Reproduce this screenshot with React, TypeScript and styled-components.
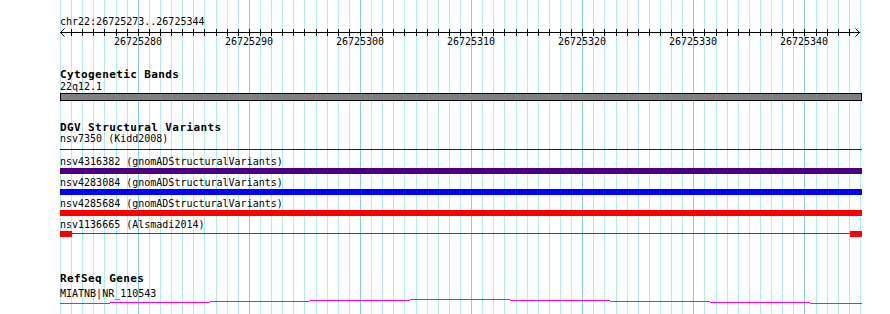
import React from 'react';
import styled, { createGlobalStyle } from 'styled-components';

const START = 26725273;
const GRID_COUNT = 73;
const X0 = 60;
const PX_PER_BP = 800 / 72;
const lineX = (i: number) => Math.round(X0 + i * PX_PER_BP);

const GlobalStyle = createGlobalStyle`
  html, body { margin: 0; padding: 0; background: #ffffff; }
  body { width: 890px; height: 314px; overflow: hidden; }
`;

const Panel = styled.div`
  position: relative;
  width: 890px;
  height: 314px;
  overflow: hidden;
  background: #ffffff;
  font-family: "DejaVu Sans Mono", "Liberation Mono", monospace;
  color: #000000;
`;

const GridLayer = styled.svg`
  position: absolute;
  left: 0;
  top: 0;
  width: 890px;
  height: 314px;
`;

const Content = styled.div`
  position: relative;
  display: flex;
  flex-direction: column;
  align-items: flex-start;
  width: 802px;
  padding: 16px 0 0 60px;
`;

const Label = styled.div<{ $gap?: number }>`
  margin-top: ${(p) => p.$gap ?? 0}px;
  font-size: 10px;
  line-height: 11px;
  height: 11px;
  white-space: nowrap;
`;

const TrackTitle = styled.div<{ $gap: number }>`
  margin-top: ${(p) => p.$gap}px;
  font-size: 11px;
  font-weight: bold;
  letter-spacing: 0.4px;
  line-height: 10px;
  height: 10px;
  white-space: nowrap;
`;

const RulerSvg = styled.svg`
  display: block;
  width: 802px;
  height: 20px;
  overflow: visible;
`;

const GlyphLane = styled.div<{ $height: number }>`
  display: flex;
  align-items: flex-start;
  width: 802px;
  height: ${(p) => p.$height}px;
`;

const Bar = styled.div<{ $color: string; $height: number; $offset: number; $outlined?: boolean }>`
  box-sizing: border-box;
  width: 100%;
  margin-top: ${(p) => p.$offset}px;
  height: ${(p) => p.$height}px;
  background: ${(p) => p.$color};
  border: ${(p) => (p.$outlined ? '1px solid #000000' : 'none')};
`;

const Block = styled.div<{ $color: string }>`
  flex: 0 0 12px;
  height: 6px;
  margin-top: 1px;
  background: ${(p) => p.$color};
`;

const Connector = styled.div<{ $color: string }>`
  flex: 1 1 auto;
  height: 1px;
  margin-top: 3px;
  background: ${(p) => p.$color};
`;

const GeneSvg = styled.svg`
  display: block;
  width: 802px;
  height: 6px;
`;

const tickLabels = [7, 17, 27, 37, 47, 57, 67];

function Grid() {
  const lines = [];
  for (let i = 0; i < GRID_COUNT; i++) {
    const major = (START + i) % 10 === 0;
    lines.push(
      <rect key={i} x={lineX(i)} y={0} width={1} height={314} fill={major ? '#87ceeb' : '#afeeee'} />
    );
  }
  return <GridLayer viewBox="0 0 890 314">{lines}</GridLayer>;
}

function Ruler() {
  const ticks = [];
  for (let i = 1; i < GRID_COUNT - 1; i++) {
    ticks.push(<rect key={i} x={lineX(i) - X0} y={2} width={1} height={7} fill="#000" />);
  }
  return (
    <RulerSvg viewBox="0 0 802 20">
      <rect x={0} y={5} width={800} height={1} fill="#000" />
      {ticks}
      <polyline points="4.5,1.5 0.5,5.5 4.5,9.5" fill="none" stroke="#000" strokeWidth={1} />
      <polyline points="795.5,1.5 799.5,5.5 795.5,9.5" fill="none" stroke="#000" strokeWidth={1} />
      {tickLabels.map((i) => (
        <text
          key={i}
          x={lineX(i) - X0}
          y={18}
          textAnchor="middle"
          fontSize="10"
          fontFamily='"DejaVu Sans Mono", "Liberation Mono", monospace'
          fill="#000"
        >
          {START + i}
        </text>
      ))}
    </RulerSvg>
  );
}

const geneSegments: [number, number, number][] = [
  [60, 110, 303],
  [110, 210, 302],
  [210, 310, 301],
  [310, 410, 300],
  [410, 510, 299],
  [510, 610, 300],
  [610, 710, 301],
  [710, 810, 302],
  [810, 862, 303],
];

function GeneGlyph() {
  return (
    <GeneSvg viewBox="0 0 802 6">
      {geneSegments.map(([a, b, y], k) => (
        <rect key={k} x={a - X0} y={y - 299} width={b - a} height={1} fill="#ff00ff" />
      ))}
    </GeneSvg>
  );
}

type Feature = { name: string; color: string };

const barFeatures: Feature[] = [
  { name: 'nsv4316382 (gnomADStructuralVariants)', color: '#4b0082' },
  { name: 'nsv4283084 (gnomADStructuralVariants)', color: '#0000ff' },
  { name: 'nsv4285684 (gnomADStructuralVariants)', color: '#ff0000' },
];

export default function App() {
  return (
    <>
      <GlobalStyle />
      <Panel>
        <Grid />
        <Content>
          <Label>chr22:26725273..26725344</Label>
          <Ruler />

          <TrackTitle $gap={23}>Cytogenetic Bands</TrackTitle>
          <Label $gap={1}>22q12.1</Label>
          <GlyphLane $height={10}>
            <Bar $color="#808080" $height={8} $offset={1} $outlined />
          </GlyphLane>

          <TrackTitle $gap={21}>DGV Structural Variants</TrackTitle>
          <Label>nsv7350 (Kidd2008)</Label>
          <GlyphLane $height={12}>
            <Bar $color="#4b0082" $height={1} $offset={5} />
          </GlyphLane>
          {barFeatures.map((f) => (
            <React.Fragment key={f.name}>
              <Label>{f.name}</Label>
              <GlyphLane $height={10}>
                <Bar $color={f.color} $height={6} $offset={1} />
              </GlyphLane>
            </React.Fragment>
          ))}
          <Label>nsv1136665 (Alsmadi2014)</Label>
          <GlyphLane $height={10}>
            <Block $color="#ff0000" />
            <Connector $color="#ff0000" />
            <Block $color="#ff0000" />
          </GlyphLane>

          <TrackTitle $gap={34}>RefSeq Genes</TrackTitle>
          <Label $gap={4}>MIATNB|NR_110543</Label>
          <GeneGlyph />
        </Content>
      </Panel>
    </>
  );
}
